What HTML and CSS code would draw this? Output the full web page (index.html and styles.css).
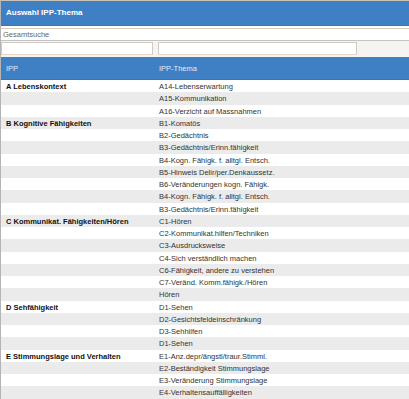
FILE: index.html
```html
<!DOCTYPE html>
<html>
<head>
    <title>Auswahl IPP-Thema</title>
    <link rel="stylesheet" href="styles.css">
</head>
<body>
    <div class="panel">
        <div class="title">Auswahl IPP-Thema</div>
        <div class="search">
            <input type="text" class="search-input" placeholder="Gesamtsuche">
        </div>
        <div class="filters">
            <input type="text" class="filter filter-ipp">
            <input type="text" class="filter filter-thema">
        </div>

        <table class="grid">
            <tr>
                <th class="col-ipp">IPP</th>
                <th>IPP-Thema</th>
            </tr>
            <tr><td class="cat">A Lebenskontext</td><td>A14-Lebenserwartung</td></tr>
            <tr><td></td><td>A15-Kommunikation</td></tr>
            <tr><td></td><td>A16-Verzicht auf Massnahmen</td></tr>
            <tr><td class="cat">B Kognitive Fähigkeiten</td><td>B1-Komatös</td></tr>
            <tr><td></td><td>B2-Gedächtnis</td></tr>
            <tr><td></td><td>B3-Gedächtnis/Erinn.fähigkeit</td></tr>
            <tr><td></td><td>B4-Kogn. Fähigk. f. alltgl. Entsch.</td></tr>
            <tr><td></td><td>B5-Hinweis Delir/per.Denkaussetz.</td></tr>
            <tr><td></td><td>B6-Veränderungen kogn. Fähigk.</td></tr>
            <tr><td></td><td>B4-Kogn. Fähigk. f. alltgl. Entsch.</td></tr>
            <tr><td></td><td>B3-Gedächtnis/Erinn.fähigkeit</td></tr>
            <tr><td class="cat">C Kommunikat. Fähigkeiten/Hören</td><td>C1-Hören</td></tr>
            <tr><td></td><td>C2-Kommunikat.hilfen/Techniken</td></tr>
            <tr><td></td><td>C3-Ausdrucksweise</td></tr>
            <tr><td></td><td>C4-Sich verständlich machen</td></tr>
            <tr><td></td><td>C6-Fähigkeit, andere zu verstehen</td></tr>
            <tr><td></td><td>C7-Veränd. Komm.fähigk./Hören</td></tr>
            <tr><td></td><td>Hören</td></tr>
            <tr><td class="cat">D Sehfähigkeit</td><td>D1-Sehen</td></tr>
            <tr><td></td><td>D2-Gesichtsfeldeinschränkung</td></tr>
            <tr><td></td><td>D3-Sehhilfen</td></tr>
            <tr><td></td><td>D1-Sehen</td></tr>
            <tr><td class="cat">E Stimmungslage und Verhalten</td><td>E1-Anz.depr/ängstl/traur.Stimml.</td></tr>
            <tr><td></td><td>E2-Beständigkeit Stimmungslage</td></tr>
            <tr><td></td><td>E3-Veränderung Stimmungslage</td></tr>
            <tr><td></td><td>E4-Verhaltensauffälligkeiten</td></tr>
        </table>
    </div>
</body>
</html>
```

FILE: styles.css
```css
body {
    margin: 0;
    font-family: 'Liberation Sans', Arial, sans-serif;
    font-size: 7.5px;
    color: #333;
    background-color: #ffffff;
}
.panel {
    border-top: 1px solid #c9c2b6;
    border-left: 1px solid #b4b4b4;
    height: 398px;
    overflow: hidden;
}
.title {
    background-color: #3f80c4;
    color: #ffffff;
    font-weight: bold;
    font-size: 8px;
    height: 24px;
    line-height: 24px;
    padding-left: 5px;
    border-bottom: 1px solid #3a73ae;
}
.search {
    padding-top: 2px;
}
.search-input {
    display: block;
    box-sizing: border-box;
    width: 100%;
    height: 13px;
    margin: 0;
    padding: 0 2px;
    border: none;
    border-top: 1px solid #d8cbbd;
    border-bottom: 1px solid #c4c4c4;
    font-family: inherit;
    font-size: 7.5px;
    color: #666;
}
.search-input::placeholder {
    color: #666;
}
.filters {
    display: flex;
    gap: 5px;
    background-color: #f6f4f1;
    padding: 1px 0 2px 0;
    height: 13px;
}
.filter {
    box-sizing: border-box;
    height: 13px;
    margin: 0;
    padding: 0;
    border: 1px solid #cfcac4;
    border-bottom-color: #e6d9c8;
    background-color: #ffffff;
}
.filter-ipp {
    width: 152px;
}
.filter-thema {
    width: 199px;
}
.grid {
    width: 100%;
    border-collapse: collapse;
}
.grid th {
    background-color: #3f80c4;
    color: #e4ecf6;
    font-weight: normal;
    text-align: left;
    height: 22px;
    padding: 0 0 0 6px;
    border-bottom: 1px solid #3a75b3;
}
.grid th.col-ipp {
    width: 147px;
    padding-left: 5px;
}
.grid td {
    height: 11.25px;
    padding: 1px 0 0 6px;
    line-height: 11.25px;
    white-space: nowrap;
}
.grid td.cat {
    padding-left: 5px;
    font-weight: bold;
    color: #111;
}
.grid tr:nth-child(odd) td {
    background-color: #ebebeb;
}
```
